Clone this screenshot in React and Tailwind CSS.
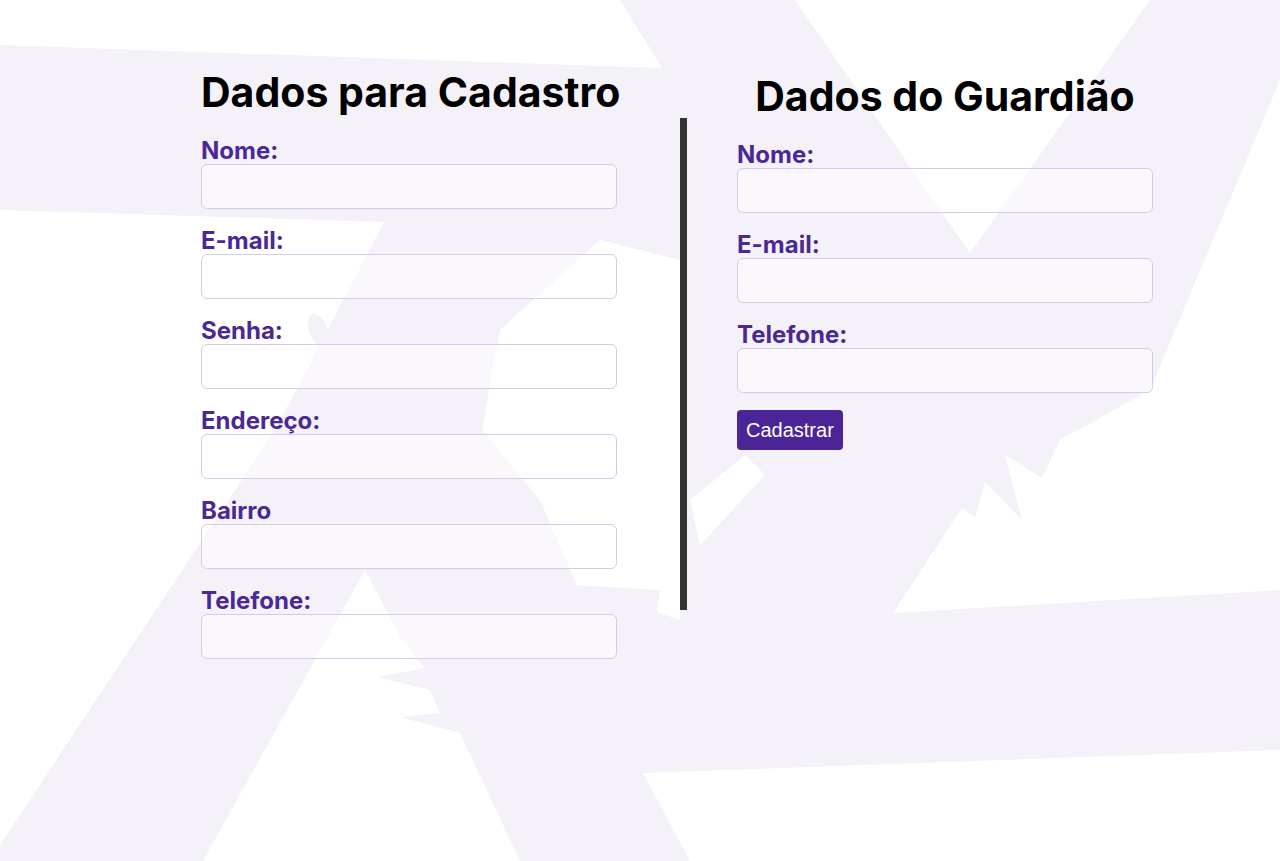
import React from "react";

const leftFields = ["Nome:", "E-mail:", "Senha:", "Endereço:", "Bairro", "Telefone:"];
const rightFields = ["Nome:", "E-mail:", "Telefone:"];

function Field({ label }) {
  return (
    <div className="mb-[19px]">
      <label className="block text-[24px] font-bold leading-[26px] text-[#4b2994]">{label}</label>
      <input
        type="text"
        className="block h-[45px] w-full rounded-[6px] border border-[#d6c9ea] bg-white/50 px-3 text-base outline-none"
      />
    </div>
  );
}

function Background() {
  return (
    <svg
      className="absolute inset-0 h-full w-full"
      viewBox="0 0 1280 861"
      preserveAspectRatio="none"
    >
      <rect width="1280" height="861" fill="#f4f1f9" />
      <g fill="#ffffff">
        <polygon points="0,0 620,0 662,68 0,45" />
        <polygon points="795,0 1150,0 970,253" />
        <polygon points="1280,80 1150,390 1060,440 1042,478 1005,455 1022,520 985,482 975,518 962,508 893,613 1280,590" />
        <polygon points="0,210 384,222 275,430 0,845" />
        <polygon points="643,773 1280,750 1280,861 690,861" />
        <polygon points="365,570 400,637 425,668 377,677 430,690 440,713 400,717 460,733 520,861 203,861" />
        <polygon points="500,330 600,240 680,260 680,620 657,612 660,590 577,585 540,500 482,430" />
        <polygon points="690,500 745,455 765,475 700,545" />
      </g>
      <ellipse cx="318" cy="330" rx="9" ry="17" fill="#f4f1f9" transform="rotate(-20 318 330)" />
    </svg>
  );
}

export default function App() {
  return (
    <div className="relative min-h-screen overflow-hidden bg-white" style={{ fontFamily: "Inter, 'Noto Sans', sans-serif" }}>
      <Background />
      <div className="relative flex pl-[201px] pt-[67px]">
        {/* Dados para cadastro */}
        <section className="w-[416px]">
          <h1 className="mb-[21px] whitespace-nowrap text-center text-[41px] font-bold leading-[50px] text-black">
            Dados para Cadastro
          </h1>
          {leftFields.map((f) => (
            <Field key={f} label={f} />
          ))}
        </section>

        <div className="ml-[63px] mt-[51px] h-[492px] w-[7px] bg-[#333333]" />

        {/* Dados do guardião */}
        <section className="ml-[50px] mt-[4px] w-[416px]">
          <h1 className="mb-[21px] whitespace-nowrap text-center text-[41px] font-bold leading-[50px] text-black">
            Dados do Guardião
          </h1>
          {rightFields.map((f) => (
            <Field key={f} label={f} />
          ))}
          <button
            type="button"
            className="-mt-[2px] h-[40px] rounded-[4px] bg-[#4b2597] px-[9px] text-[20px] leading-none text-white"
            style={{ fontFamily: "'Liberation Sans', Arial, sans-serif" }}
          >
            Cadastrar
          </button>
        </section>
      </div>
    </div>
  );
}
